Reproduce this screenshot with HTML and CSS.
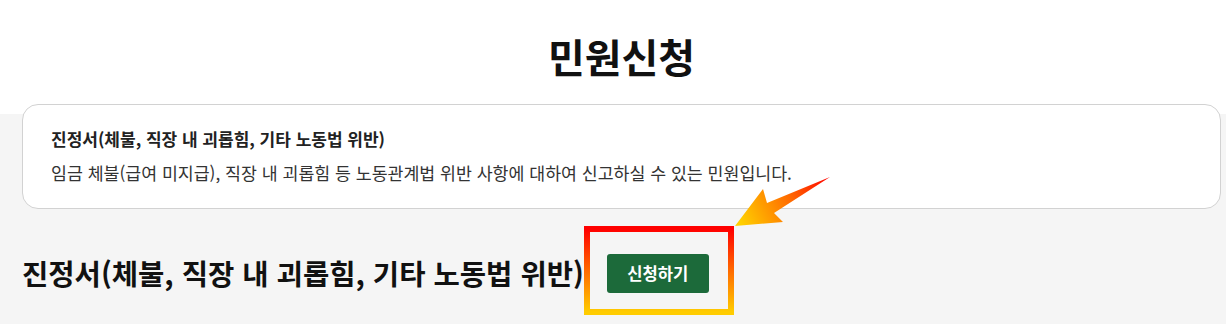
FILE: index.html
```html
<!DOCTYPE html>
<html lang="ko">
<head>
    <meta charset="UTF-8">
    <meta name="viewport" content="width=device-width, initial-scale=1.0">
    <title>민원신청</title>
    <link rel="stylesheet" href="styles.css">
</head>
<body>
    <header class="page-head">
        <h1>민원신청</h1>
    </header>

    <main class="content">
        <div class="info-card">
            <p class="info-title">진정서(체불, 직장 내 괴롭힘, 기타 노동법 위반)</p>
            <p class="info-desc">임금 체불(급여 미지급), 직장 내 괴롭힘 등 노동관계법 위반 사항에 대하여 신고하실 수 있는 민원입니다.</p>
        </div>

        <div class="apply-row">
            <h2>진정서(체불, 직장 내 괴롭힘, 기타 노동법 위반)</h2>
            <button class="apply-button">신청하기</button>
        </div>
    </main>

    <!-- annotation overlay -->
    <svg class="annotation" width="1226" height="324" viewBox="0 0 1226 324">
        <defs>
            <linearGradient id="boxGrad" x1="0" y1="0" x2="0" y2="1">
                <stop offset="0" stop-color="#ff0000"/>
                <stop offset="0.5" stop-color="#ff6a00"/>
                <stop offset="1" stop-color="#ffcc00"/>
            </linearGradient>
            <linearGradient id="arrowGrad" gradientUnits="userSpaceOnUse" x1="830" y1="177" x2="740" y2="222">
                <stop offset="0" stop-color="#ff0000"/>
                <stop offset="0.45" stop-color="#ff6a00"/>
                <stop offset="1" stop-color="#ffd000"/>
            </linearGradient>
        </defs>
        <rect x="587" y="229" width="144" height="83" fill="none" stroke="url(#boxGrad)" stroke-width="6"/>
        <polygon points="735,226 763,189 767,203 830,177 774,213 783,222" fill="url(#arrowGrad)"/>
    </svg>
</body>
</html>
```

FILE: styles.css
```css
body {
    margin: 0;
    font-family: "Noto Sans CJK KR", "Noto Sans", sans-serif;
    color: #111;
    background: #f5f5f5;
    position: relative;
    height: 324px;
    overflow: hidden;
}
.page-head {
    background: #fff;
    height: 114px;
    display: flex;
    justify-content: center;
    padding-left: 17px;
}
.page-head h1 {
    margin: 28px 0 0;
    font-size: 40px;
    font-weight: 700;
    line-height: 56px;
}
.content {
    padding: 0 5px 0 22px;
}
.info-card {
    margin-top: -10px;
    background: #fff;
    border: 1px solid #d2d2d2;
    border-radius: 16px;
    padding: 21px 28px 21px;
}
.info-card p {
    margin: 0;
}
.info-title {
    font-size: 17px;
    font-weight: 700;
    line-height: 26px;
    color: #222;
}
.info-desc {
    margin-top: 7px !important;
    font-size: 17.3px;
    line-height: 28px;
    color: #333;
}
.apply-row {
    display: flex;
    align-items: center;
    gap: 23px;
    margin-top: 44px;
}
.apply-row h2 {
    margin: 0;
    font-size: 28.6px;
    font-weight: 700;
    line-height: 40px;
}
.apply-button {
    background: #1c6a3a;
    color: #fff;
    border: none;
    border-radius: 3px;
    width: 102px;
    height: 39px;
    font-family: inherit;
    font-size: 16.6px;
    font-weight: 700;
    cursor: pointer;
}
.annotation {
    position: absolute;
    left: 0;
    top: 0;
    pointer-events: none;
}
```
